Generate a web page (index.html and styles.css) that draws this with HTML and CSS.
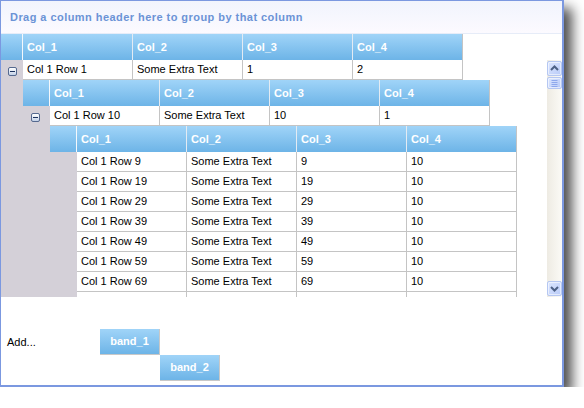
FILE: index.html
```html
<!DOCTYPE html>
<html>
<head>
<meta charset="utf-8">
<link rel="stylesheet" href="styles.css">
</head>
<body>
<div class="window">
  <div class="groupby">Drag a column header here to group by that column</div>
  <div class="gridwrap">
    <div class="viewport">
      <div class="band">
        <div class="hdr">
          <div class="sel sel1"></div>
          <div class="hc">Col_1</div><div class="hc">Col_2</div><div class="hc">Col_3</div><div class="hc">Col_4</div>
        </div>
        <div class="group">
          <div class="sel sel1 pad1"><span class="minus"></span></div>
          <div class="body">
            <div class="row"><div class="c">Col 1 Row 1</div><div class="c">Some Extra Text</div><div class="c">1</div><div class="c">2</div></div>
            <div class="band">
              <div class="hdr">
                <div class="sel sel2"></div>
                <div class="hc">Col_1</div><div class="hc">Col_2</div><div class="hc">Col_3</div><div class="hc">Col_4</div>
              </div>
              <div class="group">
                <div class="sel sel2 pad2"><span class="minus"></span></div>
                <div class="body">
                  <div class="row"><div class="c">Col 1 Row 10</div><div class="c">Some Extra Text</div><div class="c">10</div><div class="c">1</div></div>
                  <div class="band">
                    <div class="hdr">
                      <div class="sel sel2"></div>
                      <div class="hc">Col_1</div><div class="hc">Col_2</div><div class="hc">Col_3</div><div class="hc">Col_4</div>
                    </div>
                    <div class="group">
                      <div class="sel sel2"></div>
                      <div class="body">
                        <div class="row"><div class="c">Col 1 Row 9</div><div class="c">Some Extra Text</div><div class="c">9</div><div class="c">10</div></div>
                        <div class="row"><div class="c">Col 1 Row 19</div><div class="c">Some Extra Text</div><div class="c">19</div><div class="c">10</div></div>
                        <div class="row"><div class="c">Col 1 Row 29</div><div class="c">Some Extra Text</div><div class="c">29</div><div class="c">10</div></div>
                        <div class="row"><div class="c">Col 1 Row 39</div><div class="c">Some Extra Text</div><div class="c">39</div><div class="c">10</div></div>
                        <div class="row"><div class="c">Col 1 Row 49</div><div class="c">Some Extra Text</div><div class="c">49</div><div class="c">10</div></div>
                        <div class="row"><div class="c">Col 1 Row 59</div><div class="c">Some Extra Text</div><div class="c">59</div><div class="c">10</div></div>
                        <div class="row"><div class="c">Col 1 Row 69</div><div class="c">Some Extra Text</div><div class="c">69</div><div class="c">10</div></div>
                        <div class="row"><div class="c"></div><div class="c"></div><div class="c"></div><div class="c"></div></div>
                      </div>
                    </div>
                  </div>
                </div>
              </div>
            </div>
          </div>
        </div>
      </div>
    </div>
    <div class="vscroll">
      <div class="sbtn"><svg width="13" height="13" viewBox="0 0 13 13"><path d="M3 8 L6.5 4.5 L10 8" fill="none" stroke="#4d6185" stroke-width="2"/></svg></div>
      <div class="thumb"><svg width="13" height="10" viewBox="0 0 13 10"><path d="M3.5 2.5 H9.5 M3.5 4.5 H9.5 M3.5 6.5 H9.5 M3.5 8.5 H9.5" stroke="#8ea8ec" stroke-width="1"/></svg></div>
      <div class="track"></div>
      <div class="sbtn"><svg width="13" height="13" viewBox="0 0 13 13"><path d="M3 5 L6.5 8.5 L10 5" fill="none" stroke="#4d6185" stroke-width="2"/></svg></div>
    </div>
  </div>
  <div class="footer">
    <div class="addrow">
      <div class="addlbl">Add...</div>
      <div class="bandbtn">band_1</div>
    </div>
    <div class="addrow2">
      <div class="bandbtn">band_2</div>
    </div>
  </div>
</div>
</body>
</html>
```

FILE: styles.css
```css
* { box-sizing: border-box; }
html, body { margin: 0; padding: 0; background: #fff; }
body {
  font-family: "Liberation Sans", Arial, sans-serif;
  font-size: 11px;
  color: #000;
}
.window {
  width: 564px;
  height: 387px;
  border-style: solid;
  border-color: #7b98e0;
  border-width: 1px 2px 2px 1px;
  background: #fff;
  box-shadow: 8px 8px 12px rgba(0, 0, 0, 0.7);
  display: flex;
  flex-direction: column;
}
.groupby {
  height: 33px;
  flex: none;
  border-bottom: 1px solid #e6ecf8;
  background: linear-gradient(#f1f4fd, #fcfaff);
  color: #6b93d6;
  font-weight: bold;
  padding-left: 9px;
  line-height: 32px;
  letter-spacing: 0.45px;
  white-space: nowrap;
}
.gridwrap {
  display: flex;
  height: 263px;
  flex: none;
}
.viewport {
  flex: 1;
  overflow: hidden;
}
.band { display: flex; flex-direction: column; }
.hdr { display: flex; height: 26px; flex: none; }
.sel { flex: none; }
.sel1 { width: 22px; }
.sel2 { width: 27px; }
.hdr .sel {
  background: linear-gradient(#a0d4f8, #6db4e7);
  border-right: 1px solid #f4f8fc;
}
.hc {
  width: 110px;
  flex: none;
  background: linear-gradient(#a0d4f8, #6db4e7);
  color: #fff;
  font-weight: bold;
  line-height: 26px;
  padding-left: 4px;
  border-right: 1px solid #e3ebf3;
  white-space: nowrap;
}
.hc:last-child { border-right-color: #c4c4c4; }
.group { display: flex; }
.group > .sel { background: #d4d0d8; }
.pad1 { padding: 7px 0 0 7px; }
.pad2 { padding: 7px 0 0 8px; }
.body { display: flex; flex-direction: column; }
.row { display: flex; height: 20px; flex: none; }
.c {
  width: 110px;
  flex: none;
  background: #fff;
  border-right: 1px solid #c4c4c4;
  border-bottom: 1px solid #c4c4c4;
  line-height: 19px;
  padding-left: 4px;
  white-space: nowrap;
  overflow: hidden;
}
.minus {
  display: block;
  width: 9px;
  height: 9px;
  border: 1px solid #55698f;
  border-radius: 2px;
  background: linear-gradient(#ffffff, #c3d1e8);
  position: relative;
}
.minus::after {
  content: "";
  position: absolute;
  left: 1px;
  top: 3px;
  width: 5px;
  height: 1px;
  background: #1d335f;
}
.vscroll {
  width: 15px;
  flex: none;
  margin-top: 26px;
  height: 237px;
  padding: 1px 0 1px 0;
  background: linear-gradient(to right, #eeebe3, #fbfaf6);
  display: flex;
  flex-direction: column;
  align-items: center;
}
.sbtn, .thumb {
  width: 15px;
  flex: none;
  border: 1px solid #b5c7f2;
  border-radius: 2px;
  background: linear-gradient(135deg, #dce6fe, #b9cbf8);
  box-shadow: inset 0 0 0 1px rgba(255, 255, 255, 0.55);
}
.sbtn { height: 15px; }
.sbtn svg, .thumb svg { display: block; }
.thumb { height: 12px; margin-top: 1px; }
.track { flex: 1; }
.footer {
  flex: 1;
  padding-top: 32px;
}
.addrow { display: flex; align-items: center; }
.addlbl { width: 99px; padding-left: 6px; }
.addrow2 { padding-left: 159px; }
.bandbtn {
  width: 60px;
  height: 26px;
  background: linear-gradient(#a0d4f8, #6db4e7);
  color: #fff;
  font-weight: bold;
  text-align: center;
  line-height: 25px;
  border-right: 1px solid #c8c8c8;
  border-bottom: 1px solid #c8c8c8;
}
```
